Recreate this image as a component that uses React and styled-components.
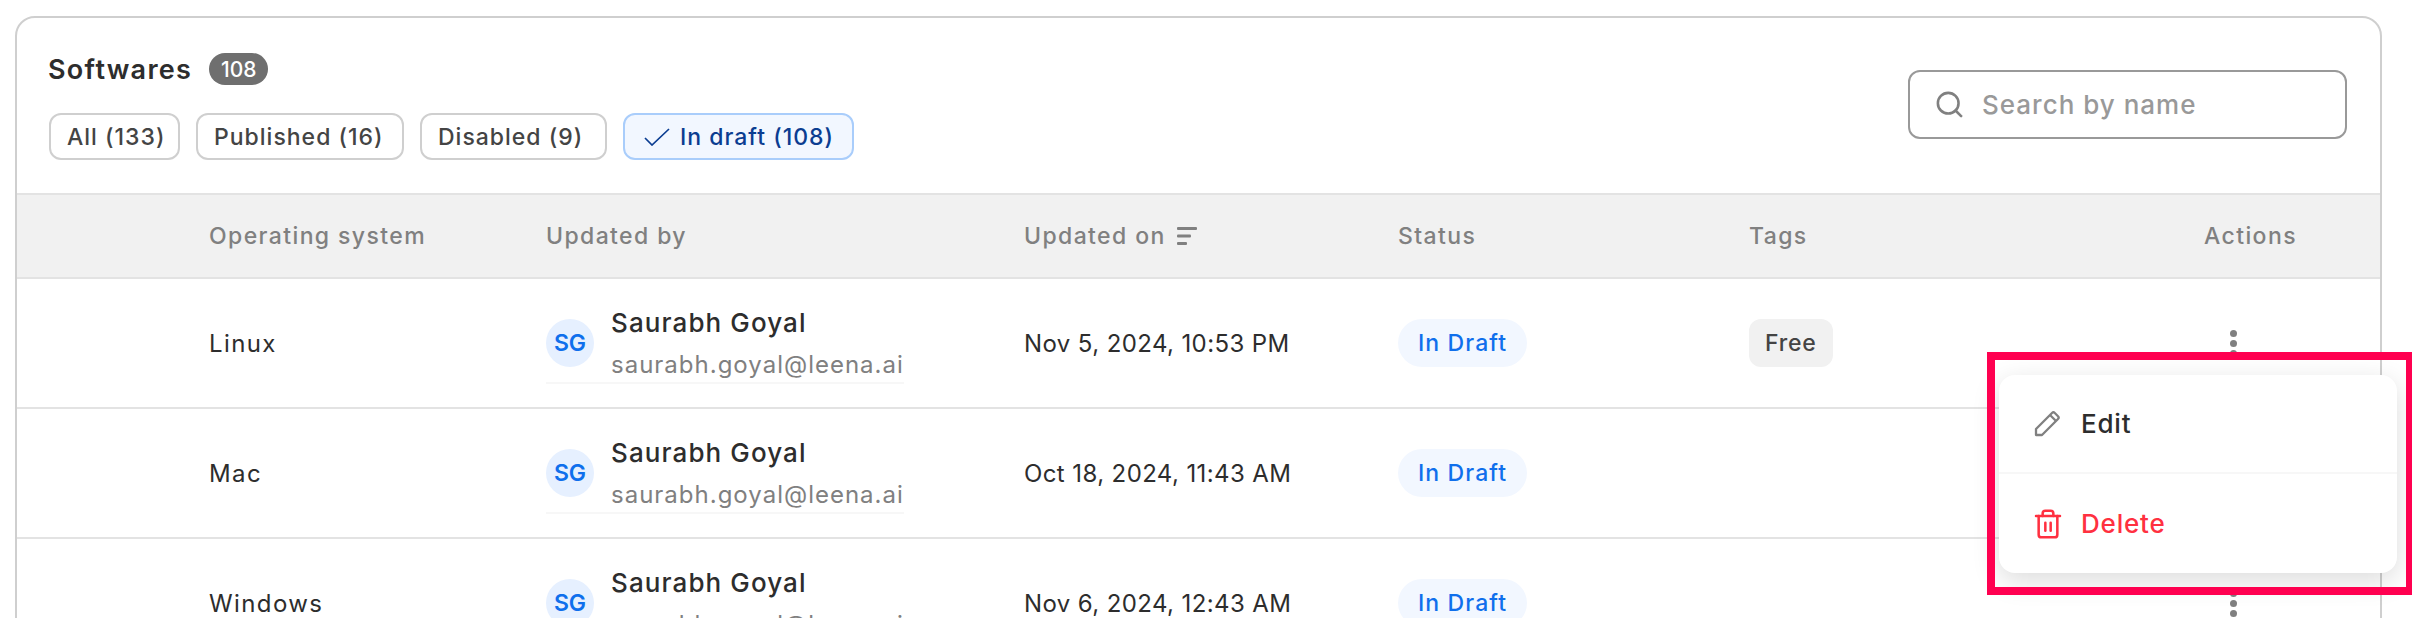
import styled, { createGlobalStyle } from 'styled-components';
import { Search, Trash2 } from 'lucide-react';

const GlobalStyle = createGlobalStyle`
    body {
        margin: 0;
        background: #fff;
        font-family: Inter, "Open Sans", sans-serif;
    }
`;

const rows = [
    { os: 'Linux', date: 'Nov 5, 2024, 10:53 PM', tag: 'Free' },
    { os: 'Mac', date: 'Oct 18, 2024, 11:43 AM' },
    { os: 'Windows', date: 'Nov 6, 2024, 12:43 AM' },
];

const filters = [
    { label: 'All (133)', width: 131 },
    { label: 'Published (16)', width: 208 },
    { label: 'Disabled (9)', width: 187 },
];

const App = () => {
    return (
        <Page>
            <GlobalStyle />
            <Panel>
                <TopBar>
                    <div>
                        <TitleRow>
                            <Title>Softwares</Title>
                            <Count>108</Count>
                        </TitleRow>
                        <Filters>
                            {filters.map((f) => (
                                <Filter key={f.label} $width={f.width}>{f.label}</Filter>
                            ))}
                            <Filter $active $width={231}>
                                <svg width="26" height="18" viewBox="0 0 26 18" fill="none" stroke="#0b3d91" strokeWidth="1.7">
                                    <path d="M1 10l7 7L25 1" />
                                </svg>
                                In draft (108)
                            </Filter>
                        </Filters>
                    </div>
                    <SearchBox>
                        <Search size={31} color="#808080" strokeWidth={2} />
                        <span>Search by name</span>
                    </SearchBox>
                </TopBar>
                <HeadRow>
                    <span />
                    <span>Operating system</span>
                    <span>Updated by</span>
                    <SortCell>
                        Updated on
                        <svg width="22" height="20" viewBox="0 0 22 20" fill="#808080">
                            <rect x="1" y="1" width="20" height="3" rx="1" />
                            <rect x="1" y="8.5" width="14" height="3" rx="1" />
                            <rect x="1" y="16" width="10" height="3" rx="1" />
                        </svg>
                    </SortCell>
                    <span>Status</span>
                    <span>Tags</span>
                    <span>Actions</span>
                </HeadRow>
                {rows.map((r) => (
                    <Row key={r.os}>
                        <span />
                        <OsName>{r.os}</OsName>
                        <User>
                            <Avatar>SG</Avatar>
                            <div>
                                <Name>Saurabh Goyal</Name>
                                <Email>saurabh.goyal@leena.ai</Email>
                            </div>
                        </User>
                        <span>{r.date}</span>
                        <div>
                            <StatusChip>In Draft</StatusChip>
                        </div>
                        <div>{r.tag && <TagChip>{r.tag}</TagChip>}</div>
                        <Dots>
                            <i />
                            <i />
                            <i />
                        </Dots>
                    </Row>
                ))}
            </Panel>
            <Menu>
                <MenuItem>
                    <svg width="32" height="32" viewBox="0 1 32 32" fill="none" stroke="#808080" strokeWidth="2.3" strokeLinejoin="round">
                        <path d="M4 22L20 6a2 2 0 0 1 2.800 0l3.200 3.200a2 2 0 0 1 0 2.800L10 28H4z" />
                        <path d="M18 8l6 6" />
                    </svg>
                    Edit
                </MenuItem>
                <MenuItem $danger>
                    <Trash2 size={32} color="#ff3040" strokeWidth={1.9} />
                    Delete
                </MenuItem>
            </Menu>
            <Highlight />
        </Page>
    );
};

const Page = styled.div`
    position: relative;
    height: 618px;
    overflow: hidden;
    padding: 16px 30px 0 15px;
    box-sizing: border-box;
`;

const Panel = styled.div`
    border: 2px solid #cfcfcf;
    border-radius: 20px;
    background: #fff;
`;

const TopBar = styled.div`
    height: 175px;
    box-sizing: border-box;
    padding: 35px 33px 0 31px;
    display: flex;
    justify-content: space-between;
    align-items: flex-start;
`;

const TitleRow = styled.div`
    display: flex;
    align-items: center;
    gap: 17px;
    height: 32px;
`;

const Title = styled.h2`
    margin: 0;
    font-size: 27px;
    font-weight: 600;
    letter-spacing: 1.3px;
    color: #2d2d2d;
`;

const Count = styled.span`
    width: 59px;
    height: 32px;
    border-radius: 16px;
    background: #6f6f6f;
    color: #fff;
    font-size: 21px;
    font-weight: 500;
    display: flex;
    align-items: center;
    justify-content: center;
`;

const Filters = styled.div`
    display: flex;
    gap: 16px;
    margin: 28px 0 0 1px;
`;

const Filter = styled.div`
    width: ${(p) => p.$width}px;
    height: 47px;
    box-sizing: border-box;
    padding-left: ${(p) => (p.$active ? 19 : 16)}px;
    border: 2px solid ${(p) => (p.$active ? '#a9cdfb' : '#cfcfcf')};
    border-radius: 12px;
    background: ${(p) => (p.$active ? '#f2f7ff' : '#fff')};
    color: ${(p) => (p.$active ? '#0b3d91' : '#444')};
    font-size: 23px;
    font-weight: 500;
    letter-spacing: 1px;
    display: flex;
    align-items: center;
    gap: 10px;
    white-space: nowrap;
`;

const SearchBox = styled.div`
    width: 439px;
    height: 69px;
    box-sizing: border-box;
    margin-top: 17px;
    padding: 0 24px;
    border: 2px solid #999;
    border-radius: 12px;
    display: flex;
    align-items: center;
    gap: 17px;
    color: #999;
    font-size: 26px;
    font-weight: 500;
    letter-spacing: 1px;
`;

const columns = '192px 337px 478px 374px 351px 455px 1fr';

const HeadRow = styled.div`
    height: 86px;
    box-sizing: border-box;
    display: grid;
    grid-template-columns: ${columns};
    align-items: center;
    background: #f1f1f1;
    border-top: 2px solid #e3e3e3;
    border-bottom: 2px solid #e3e3e3;
    color: #808080;
    font-size: 23px;
    font-weight: 500;
    letter-spacing: 1.4px;
`;

const SortCell = styled.span`
    display: flex;
    align-items: center;
    gap: 10px;
`;

const Row = styled.div`
    height: 130px;
    box-sizing: border-box;
    display: grid;
    grid-template-columns: ${columns};
    align-items: center;
    border-bottom: 2px solid #e3e3e3;
    color: #2d2d2d;
    font-size: 24px;
    letter-spacing: 0.4px;
`;

const OsName = styled.span`
    letter-spacing: 1.4px;
`;

const User = styled.div`
    width: 358px;
    display: flex;
    align-items: center;
    gap: 17px;
    padding-top: 2px;
    border-bottom: 2px solid #f7f7f7;
`;

const Avatar = styled.div`
    width: 48px;
    height: 48px;
    flex: none;
    border-radius: 50%;
    background: #e6f0ff;
    color: #0f6fec;
    font-size: 23px;
    font-weight: 600;
    letter-spacing: 0;
    display: flex;
    align-items: center;
    justify-content: center;
`;

const Name = styled.div`
    font-size: 26px;
    font-weight: 500;
    letter-spacing: 1.1px;
    line-height: 36px;
`;

const Email = styled.div`
    margin-top: 7px;
    font-size: 24px;
    letter-spacing: 1px;
    line-height: 34px;
    color: #808080;
`;

const StatusChip = styled.span`
    display: inline-flex;
    align-items: center;
    height: 48px;
    padding: 0 20px;
    border-radius: 24px;
    background: #f2f7ff;
    color: #0f6fec;
    font-size: 23px;
    font-weight: 500;
    letter-spacing: 1.1px;
`;

const TagChip = styled.span`
    display: inline-flex;
    align-items: center;
    height: 48px;
    padding: 0 16px;
    border-radius: 12px;
    background: #f1f1f1;
    color: #444;
    font-size: 23px;
    font-weight: 500;
    letter-spacing: 0.8px;
`;

const Dots = styled.div`
    display: flex;
    flex-direction: column;
    gap: 3px;
    padding-left: 26px;
    i {
        width: 7px;
        height: 7px;
        border-radius: 50%;
        background: #808080;
    }
`;

const Menu = styled.div`
    position: absolute;
    left: 1999px;
    top: 375px;
    width: 398px;
    height: 198px;
    background: #fff;
    border-radius: 16px;
    box-shadow: 0 8px 28px rgba(0, 0, 0, 0.14);
    display: flex;
    flex-direction: column;
`;

const MenuItem = styled.div`
    flex: 1;
    display: flex;
    align-items: center;
    gap: 17px;
    padding-left: 33px;
    font-size: 26px;
    font-weight: 500;
    letter-spacing: 0.8px;
    color: ${(p) => (p.$danger ? '#ff3040' : '#2d2d2d')};
    & + & {
        flex: none;
        height: 101px;
        box-sizing: border-box;
        border-top: 2px solid #f7f7f7;
    }
`;

const Highlight = styled.div`
    position: absolute;
    left: 1987px;
    top: 352px;
    width: 427px;
    height: 243px;
    box-sizing: border-box;
    border: 8px solid #ff0050;
`;

export default App;
